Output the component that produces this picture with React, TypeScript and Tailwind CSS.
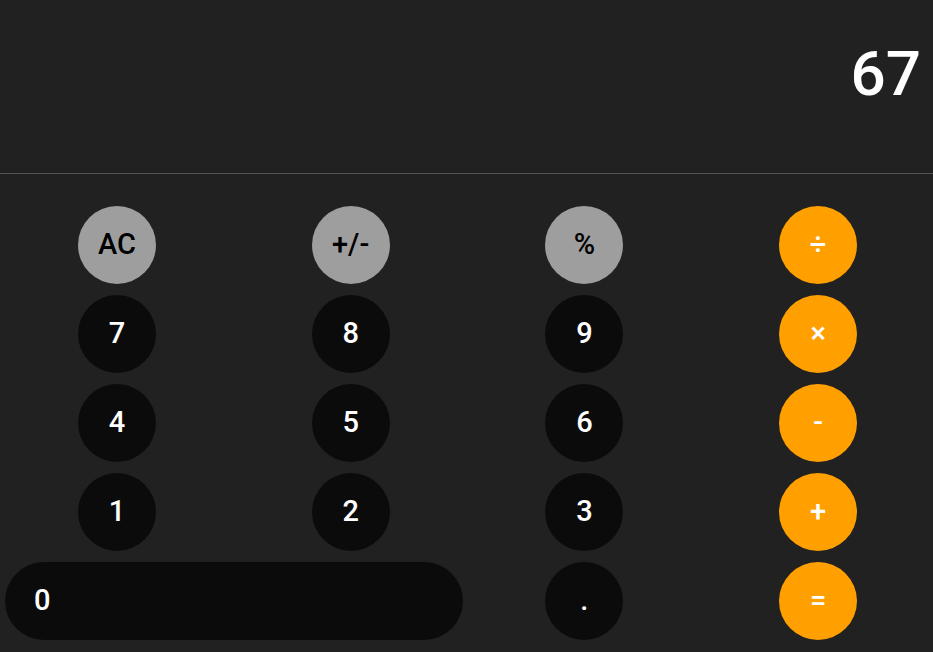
import React, { useState } from 'react';

type Key = { label: string; kind: 'fn' | 'num' | 'op'; wide?: boolean };

const keys: Key[] = [
  { label: 'AC', kind: 'fn' },
  { label: '+/-', kind: 'fn' },
  { label: '%', kind: 'fn' },
  { label: '÷', kind: 'op' },
  { label: '7', kind: 'num' },
  { label: '8', kind: 'num' },
  { label: '9', kind: 'num' },
  { label: '×', kind: 'op' },
  { label: '4', kind: 'num' },
  { label: '5', kind: 'num' },
  { label: '6', kind: 'num' },
  { label: '-', kind: 'op' },
  { label: '1', kind: 'num' },
  { label: '2', kind: 'num' },
  { label: '3', kind: 'num' },
  { label: '+', kind: 'op' },
  { label: '0', kind: 'num', wide: true },
  { label: '.', kind: 'num' },
  { label: '=', kind: 'op' },
];

const kindClass = {
  fn: 'bg-[#9e9e9e] text-black',
  num: 'bg-[#0b0b0b] text-white',
  op: 'bg-[#ffa000] text-white',
};

const App = () => {
  const [display] = useState('67');

  return (
    <div className="h-[652px] w-full bg-[#212121] font-['Roboto',sans-serif] overflow-hidden">
      {/* display */}
      <div className="h-[174px] border-b border-[#555555] px-3 pt-9 flex justify-end">
        <span className="text-[62px] leading-[75px] font-medium text-white">{display}</span>
      </div>

      {/* keypad */}
      <div className="grid w-[935px] grid-cols-4 gap-y-[11px] pt-8">
        {keys.map((k) =>
          k.wide ? (
            <div key={k.label} className="col-span-2 px-[5px]">
              <button
                className={`h-[78px] w-full rounded-full pl-[29px] text-left text-[29px] font-medium ${kindClass[k.kind]}`}
              >
                {k.label}
              </button>
            </div>
          ) : (
            <div key={k.label} className="flex justify-center">
              <button
                className={`h-[78px] w-[78px] rounded-full flex items-center justify-center text-[29px] font-medium ${kindClass[k.kind]}`}
              >
                {k.label}
              </button>
            </div>
          )
        )}
      </div>
    </div>
  );
};

export default App;
